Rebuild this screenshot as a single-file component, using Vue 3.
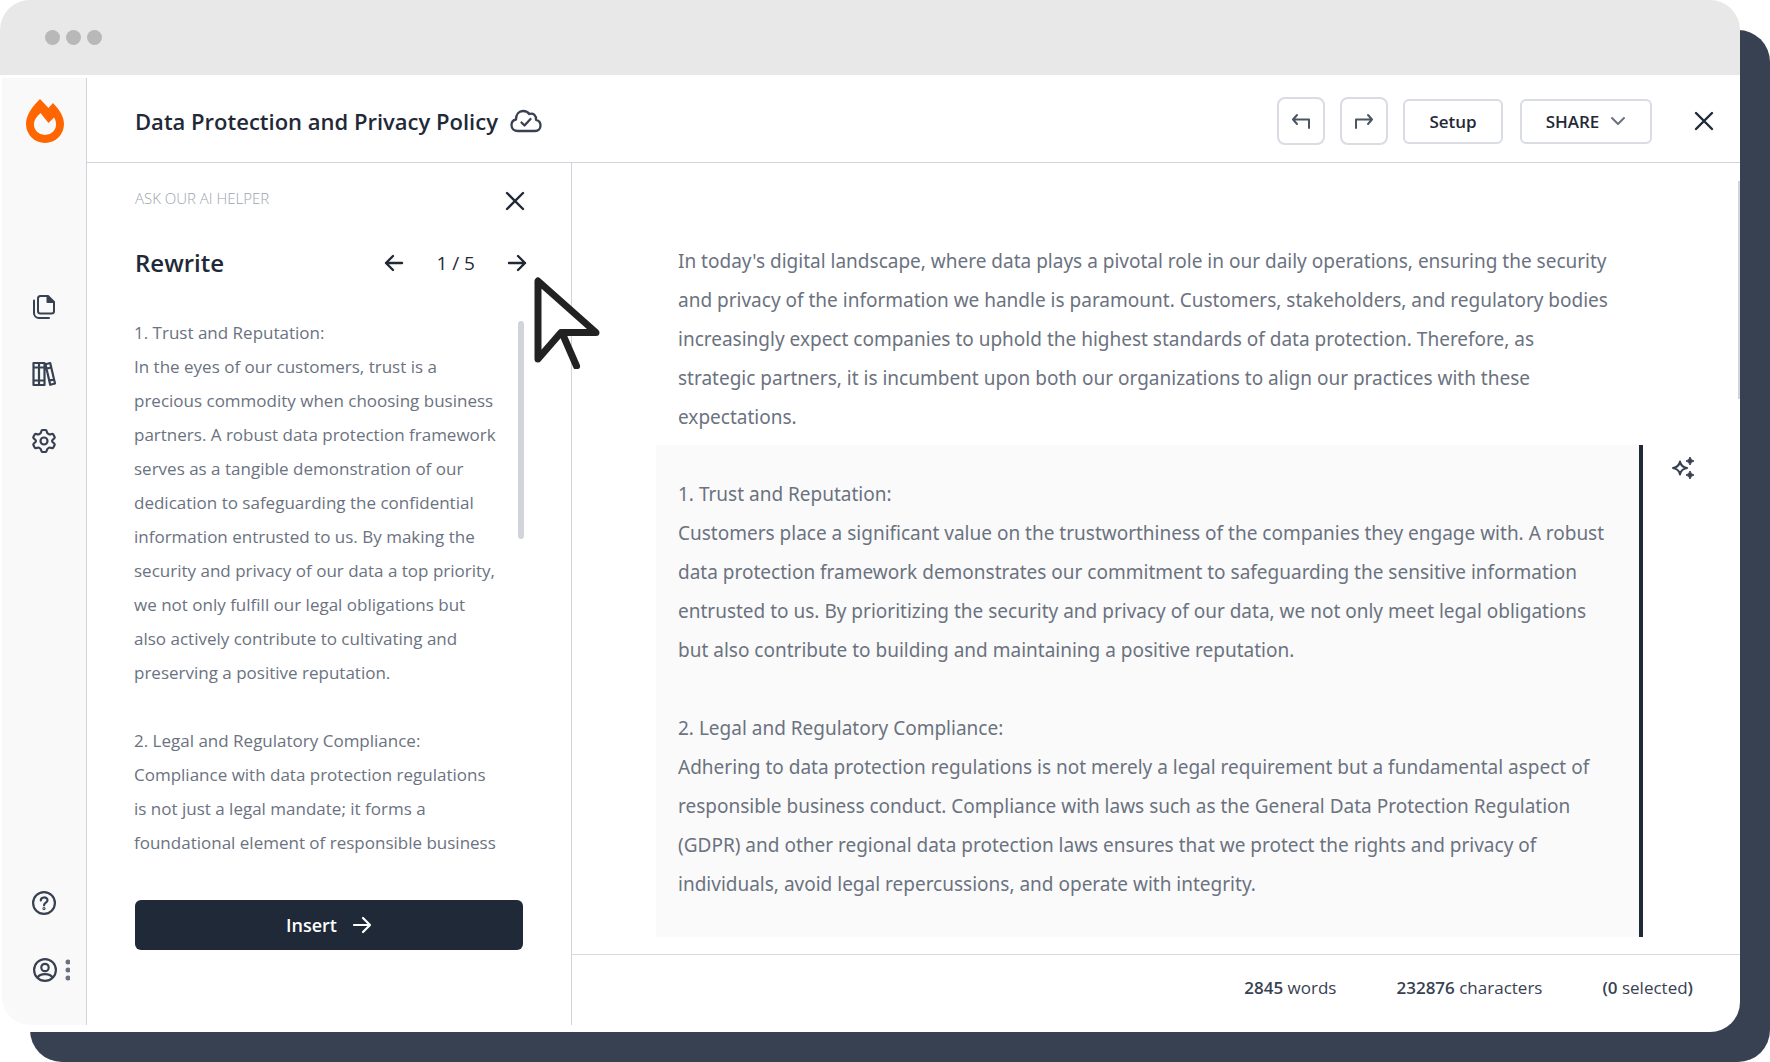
<script setup>
const suggestion = `1. Trust and Reputation:
In the eyes of our customers, trust is a
precious commodity when choosing business
partners. A robust data protection framework
serves as a tangible demonstration of our
dedication to safeguarding the confidential
information entrusted to us. By making the
security and privacy of our data a top priority,
we not only fulfill our legal obligations but
also actively contribute to cultivating and
preserving a positive reputation.

2. Legal and Regulatory Compliance:
Compliance with data protection regulations
is not just a legal mandate; it forms a
foundational element of responsible business`

const intro = `In today's digital landscape, where data plays a pivotal role in our daily operations, ensuring the security
and privacy of the information we handle is paramount. Customers, stakeholders, and regulatory bodies
increasingly expect companies to uphold the highest standards of data protection. Therefore, as
strategic partners, it is incumbent upon both our organizations to align our practices with these
expectations.`

const selected = `1. Trust and Reputation:
Customers place a significant value on the trustworthiness of the companies they engage with. A robust
data protection framework demonstrates our commitment to safeguarding the sensitive information
entrusted to us. By prioritizing the security and privacy of our data, we not only meet legal obligations
but also contribute to building and maintaining a positive reputation.

2. Legal and Regulatory Compliance:
Adhering to data protection regulations is not merely a legal requirement but a fundamental aspect of
responsible business conduct. Compliance with laws such as the General Data Protection Regulation
(GDPR) and other regional data protection laws ensures that we protect the rights and privacy of
individuals, avoid legal repercussions, and operate with integrity.`
</script>

<template>
  <div class="stage">
    <div class="window">
      <div class="titlebar"><i></i><i></i><i></i></div>
      <div class="app">
        <nav class="rail" aria-label="Main">
          <a class="logo" href="#" aria-label="Home">
            <svg width="38" height="44" viewBox="0 0 38 44">
              <path fill="#ff6600" fill-rule="evenodd" d="M14 0 L22.500 9 L27 4 C34 11 38 18 38 25 A19 19 0 0 1 0 25 C0 16 6 8 14 0Z M14.500 14 C10.500 18 8 21 8 25.500 A11 10.500 0 0 0 30 25.500 C30 22.500 29.500 20.500 28 18.500 L22.500 24Z" />
            </svg>
          </a>
          <button class="icon" aria-label="Documents">
            <svg width="24" height="26" viewBox="0 0 24 26" fill="none" stroke="#384152" stroke-width="2" stroke-linecap="round" stroke-linejoin="round">
              <path d="M8.500 2 H16 L22 8 V17 a2.500 2.500 0 0 1-2.500 2.500 H8.500 A2.500 2.500 0 0 1 6 17 V4.500 A2.500 2.500 0 0 1 8.500 2Z" />
              <path d="M15.500 2.500 V8 H21.500Z" fill="#384152" />
              <path d="M2 6.500 V19 a5 5 0 0 0 5 5 H17" />
            </svg>
          </button>
          <button class="icon" aria-label="Library">
            <svg width="24" height="26" viewBox="0 0 24 26" fill="none" stroke="#384152" stroke-width="2.200" stroke-linejoin="round">
              <path d="M1.500 2 H12.500 V24 H1.500Z M7 2 V24 M1.500 6.500 H12.500 M1.500 19.500 H12.500 M13.500 3.200 L18.200 2 L23 22.500 L18.200 23.800Z M14.500 7.700 L19 6.500 M17.200 19.600 L22 18.400" />
            </svg>
          </button>
          <button class="icon" aria-label="Settings">
            <svg width="24" height="26" viewBox="0 0 24 26" fill="none" stroke="#384152" stroke-width="2.200" stroke-linejoin="round">
              <path d="M10.500 2 H13.500 Q14.500 2 14.700 3.500 Q15 5.500 17 6.300 Q18 6.700 19.500 6 Q20.700 5.500 21.300 6.500 L22.500 8.700 Q23 9.800 22 10.600 Q20 12 20 13 Q20 14 22 15.400 Q23 16.200 22.500 17.300 L21.300 19.500 Q20.700 20.500 19.500 20 Q18 19.300 17 19.700 Q15 20.500 14.700 22.500 Q14.500 24 13.500 24 H10.500 Q9.500 24 9.300 22.500 Q9 20.500 7 19.700 Q6 19.300 4.500 20 Q3.300 20.500 2.700 19.500 L1.500 17.300 Q1 16.200 2 15.400 Q4 14 4 13 Q4 12 2 10.600 Q1 9.800 1.500 8.700 L2.700 6.500 Q3.300 5.500 4.500 6 Q6 6.700 7 6.300 Q9 5.500 9.300 3.500 Q9.500 2 10.500 2Z" />
              <circle cx="12" cy="13" r="3.500" />
            </svg>
          </button>
          <button class="icon help" aria-label="Help">
            <svg width="24" height="26" viewBox="0 0 24 26" fill="none" stroke="#384152" stroke-width="2.200" stroke-linecap="round" stroke-linejoin="round">
              <circle cx="12" cy="13" r="10.900" />
              <path d="M8.800 10.500 C8.800 6.500 15.500 6.500 15.500 10.300 C15.500 12.700 12 12.700 12 15.300" />
              <circle cx="12" cy="18.600" r=".5" />
            </svg>
          </button>
          <button class="icon account" aria-label="Account">
            <svg width="38" height="26" viewBox="0 0 38 26" fill="none" stroke="#384152" stroke-width="2.200">
              <circle cx="13" cy="13" r="10.900" />
              <circle cx="13" cy="10.500" r="3.700" />
              <path d="M5.500 20.800 C8 16 18 16 20.500 20.800" />
              <g fill="#6b7280" stroke="none"><circle cx="36" cy="5" r="2.500" /><circle cx="36" cy="13" r="2.500" /><circle cx="36" cy="21" r="2.500" /></g>
            </svg>
          </button>
        </nav>

        <div class="main">
          <header class="header">
            <h1>Data Protection and Privacy Policy</h1>
            <svg class="cloud" width="32" height="24" viewBox="0 0 32 24" fill="none" stroke="#384152" stroke-width="2.300" stroke-linecap="round" stroke-linejoin="round">
              <path d="M8 22 C4 22 1.500 19.500 1.500 16 C1.500 13 3.500 11 6 10.500 C6 5 9 2 13 2 C16 2 18 3 19.300 5 C23.500 3.800 26.500 6.500 26 10.800 C29 11.500 30.500 13.500 30.500 16.500 C30.500 19.500 28.500 22 25 22Z" />
              <path d="M11.500 13.500 L14.500 16.500 L20.500 10" />
            </svg>
            <div class="actions">
              <button class="btn square" aria-label="Undo">
                <svg width="20" height="18" viewBox="0 0 20 18" fill="none" stroke="#4b5563" stroke-width="2" stroke-linecap="round" stroke-linejoin="round"><path d="M6 3 L2 7.500 L6 12 M2 7.500 H18 V16" /></svg>
              </button>
              <button class="btn square" aria-label="Redo">
                <svg width="20" height="18" viewBox="0 0 20 18" fill="none" stroke="#4b5563" stroke-width="2" stroke-linecap="round" stroke-linejoin="round"><path d="M14 3 L18 7.500 L14 12 M18 7.500 H2 V16" /></svg>
              </button>
              <button class="btn setup">Setup</button>
              <button class="btn share">SHARE
                <svg width="16" height="10" viewBox="0 0 16 10" fill="none" stroke="#6b7280" stroke-width="2" stroke-linecap="round" stroke-linejoin="round"><path d="M2 2 L8 8 L14 2" /></svg>
              </button>
              <button class="icon close" aria-label="Close document">
                <svg width="20" height="20" viewBox="0 0 20 20" stroke="#1f2937" stroke-width="2.400" stroke-linecap="round"><path d="M2 2 L18 18 M18 2 L2 18" /></svg>
              </button>
            </div>
          </header>

          <div class="body">
            <aside class="helper">
              <div class="row ask">
                <span>ASK OUR AI HELPER</span>
                <button class="icon" aria-label="Close helper">
                  <svg width="20" height="20" viewBox="0 0 20 20" stroke="#1f2937" stroke-width="2.400" stroke-linecap="round"><path d="M2 2 L18 18 M18 2 L2 18" /></svg>
                </button>
              </div>
              <div class="row rewrite">
                <h2>Rewrite</h2>
                <div class="pager">
                  <button class="icon" aria-label="Previous">
                    <svg width="20" height="18" viewBox="0 0 20 18" fill="none" stroke="#1f2937" stroke-width="2.400" stroke-linecap="round" stroke-linejoin="round"><path d="M9 2 L2 9 L9 16 M2 9 H18" /></svg>
                  </button>
                  <span>1 / 5</span>
                  <button class="icon" aria-label="Next">
                    <svg width="20" height="18" viewBox="0 0 20 18" fill="none" stroke="#1f2937" stroke-width="2.400" stroke-linecap="round" stroke-linejoin="round"><path d="M11 2 L18 9 L11 16 M18 9 H2" /></svg>
                  </button>
                </div>
              </div>
              <div class="suggestion">
                <p>{{ suggestion }}</p>
                <div class="thumb"></div>
              </div>
              <button class="insert">Insert
                <svg width="20" height="18" viewBox="0 0 20 18" fill="none" stroke="#fff" stroke-width="2.200" stroke-linecap="round" stroke-linejoin="round"><path d="M11 2 L18 9 L11 16 M18 9 H2" /></svg>
              </button>
              <svg class="cursor" width="68" height="92" viewBox="533 277 68 92" fill="#fff" stroke="#222" stroke-width="7" stroke-linecap="round" stroke-linejoin="round">
                <path d="M538 281 V359 L561 332.500 H596Z" /><path d="M563 335 L576.500 366" />
              </svg>
            </aside>

            <section class="editor">
              <div class="page">
                <p class="intro">{{ intro }}</p>
                <div class="marked">
                  <p class="selected">{{ selected }}</p>
                  <button class="icon" aria-label="AI suggestions">
                    <svg width="24" height="24" viewBox="0 0 24 24" fill="#384152">
                      <path fill="none" stroke="#384152" stroke-width="2" stroke-linejoin="round" d="M9 5.500 Q10 11 16 12 Q10 13 9 18.500 Q8 13 2 12 Q8 11 9 5.500Z" />
                      <path d="M19 1 Q19.700 4.300 23 5 Q19.700 5.700 19 9 Q18.300 5.700 15 5 Q18.300 4.300 19 1Z M19 15 Q19.700 18.300 23 19 Q19.700 19.700 19 23 Q18.300 19.700 15 19 Q18.300 18.300 19 15Z" stroke="#384152" />
                    </svg>
                  </button>
                </div>
              </div>
              <div class="page-thumb"></div>
              <footer>
                <span><b>2845</b> words</span>
                <span><b>232876</b> characters</span>
                <span><b>(0</b> selected<b>)</b></span>
              </footer>
            </section>
          </div>
        </div>
      </div>
    </div>
  </div>
</template>

<style>
body { margin: 0; background: #fff; }
</style>

<style scoped>
* { box-sizing: border-box; }
.stage {
  position: relative;
  display: flex;
  min-height: 100vh;
  padding: 0 30px 30px 0;
  font-family: "Open Sans", "Noto Sans", sans-serif;
  color: #1f2937;
}
.stage::before {
  content: "";
  position: absolute;
  inset: 30px 0 0 30px;
  border-radius: 32px;
  background: #384152;
}
.window {
  position: relative;
  flex: 1;
  display: flex;
  flex-direction: column;
  overflow: hidden;
  border-radius: 30px;
  background: #fff;
}
.titlebar {
  display: flex;
  align-items: center;
  gap: 6px;
  height: 75px;
  padding-left: 45px;
  background: #e8e8e8;
}
.titlebar i { width: 15px; height: 15px; border-radius: 50%; background: #b8b8b8; }
.app { flex: 1; display: flex; }
h1, h2, p { margin: 0; }
button { font: inherit; color: inherit; cursor: pointer; }
svg { display: block; }
.icon { padding: 0; border: 0; background: none; }

.rail {
  display: flex;
  flex-direction: column;
  align-items: flex-start;
  width: 85px;
  margin: 3px 0 7px 2px;
  padding: 21px 0 42px 30px;
  border-right: 1px solid #d1d5db;
  border-bottom-left-radius: 28px;
  background: #f9f9f9;
}
.logo { margin: 0 0 151px -6px; }
.rail .icon { margin-bottom: 41px; }
.rail .help { margin-top: auto; }
.rail .account { margin-bottom: 0; }

.main { flex: 1; display: flex; flex-direction: column; min-width: 0; }
.header {
  display: flex;
  align-items: center;
  height: 88px;
  padding: 5px 26px 0 48px;
  border-bottom: 1px solid #d1d5db;
}
h1 { font-size: 22px; line-height: 32px; font-weight: 600; }
.cloud { margin-left: 12px; }
.actions { display: flex; align-items: center; gap: 15px; margin-left: auto; }
.btn {
  display: flex;
  align-items: center;
  justify-content: center;
  height: 45px;
  border: 2px solid #d9dce3;
  border-radius: 6px;
  background: #fff;
  font-size: 17px;
  font-weight: 600;
}
.square { width: 48px; height: 48px; border-radius: 8px; }
.setup { width: 100px; }
.share { width: 132px; gap: 11px; margin-left: 2px; }
.close { margin-left: 27px; }

.body { flex: 1; display: flex; }
.helper {
  position: relative;
  display: flex;
  flex-direction: column;
  width: 485px;
  margin-bottom: 7px;
  padding: 22px 48px 75px;
  border-right: 1px solid #d1d5db;
}
.row { display: flex; align-items: center; justify-content: space-between; }
.ask { height: 32px; margin-right: -2px; font-size: 15px; font-weight: 300; color: #9ca3af; }
.ask span { padding-bottom: 7px; }
.rewrite { height: 34px; margin-top: 29px; }
h2 { font-size: 24px; line-height: 34px; font-weight: 600; }
.pager { display: flex; align-items: center; gap: 32px; margin-right: -4px; font-size: 19px; }
.suggestion { flex: 1; display: flex; justify-content: space-between; margin: 36px -1px 40px; }
.suggestion p { font-size: 17px; line-height: 34px; color: #6b7280; white-space: pre; }
.thumb { width: 6px; height: 218px; margin-top: 5px; border-radius: 3px; background: #d1d5db; }
.insert {
  display: flex;
  align-items: center;
  justify-content: center;
  gap: 15px;
  height: 50px;
  border: 0;
  border-radius: 6px;
  background: #1f2937;
  color: #fff;
  font-size: 18px;
  font-weight: 600;
}
.cursor { position: absolute; top: 114px; right: -30px; z-index: 2; }

.editor { position: relative; flex: 1; display: flex; flex-direction: column; min-width: 0; }
.page { flex: 1; padding: 79px 45px 17px 84px; }
.page p {
  font-family: "Noto Sans", "Open Sans", sans-serif;
  font-size: 19px;
  line-height: 39px;
  color: #6b7280;
  white-space: pre;
}
.intro { padding: 0 0 8px 22px; }
.marked { display: flex; align-items: flex-start; justify-content: space-between; }
.page .selected {
  flex: 1;
  padding: 30px 0 33px 22px;
  border-right: 4px solid #1f2937;
  background: #fafafa;
}
.marked .icon { margin: 11px 0 0 28px; }
.page-thumb {
  position: absolute;
  top: 18px;
  right: 0;
  width: 2px;
  height: 218px;
  background: #d1d5db;
}
footer {
  display: flex;
  align-items: center;
  justify-content: flex-end;
  gap: 60px;
  height: 78px;
  padding: 0 47px 12px 0;
  border-top: 1px solid #d9dce3;
  font-size: 17px;
  color: #384152;
}
footer b { font-weight: 600; }
</style>
